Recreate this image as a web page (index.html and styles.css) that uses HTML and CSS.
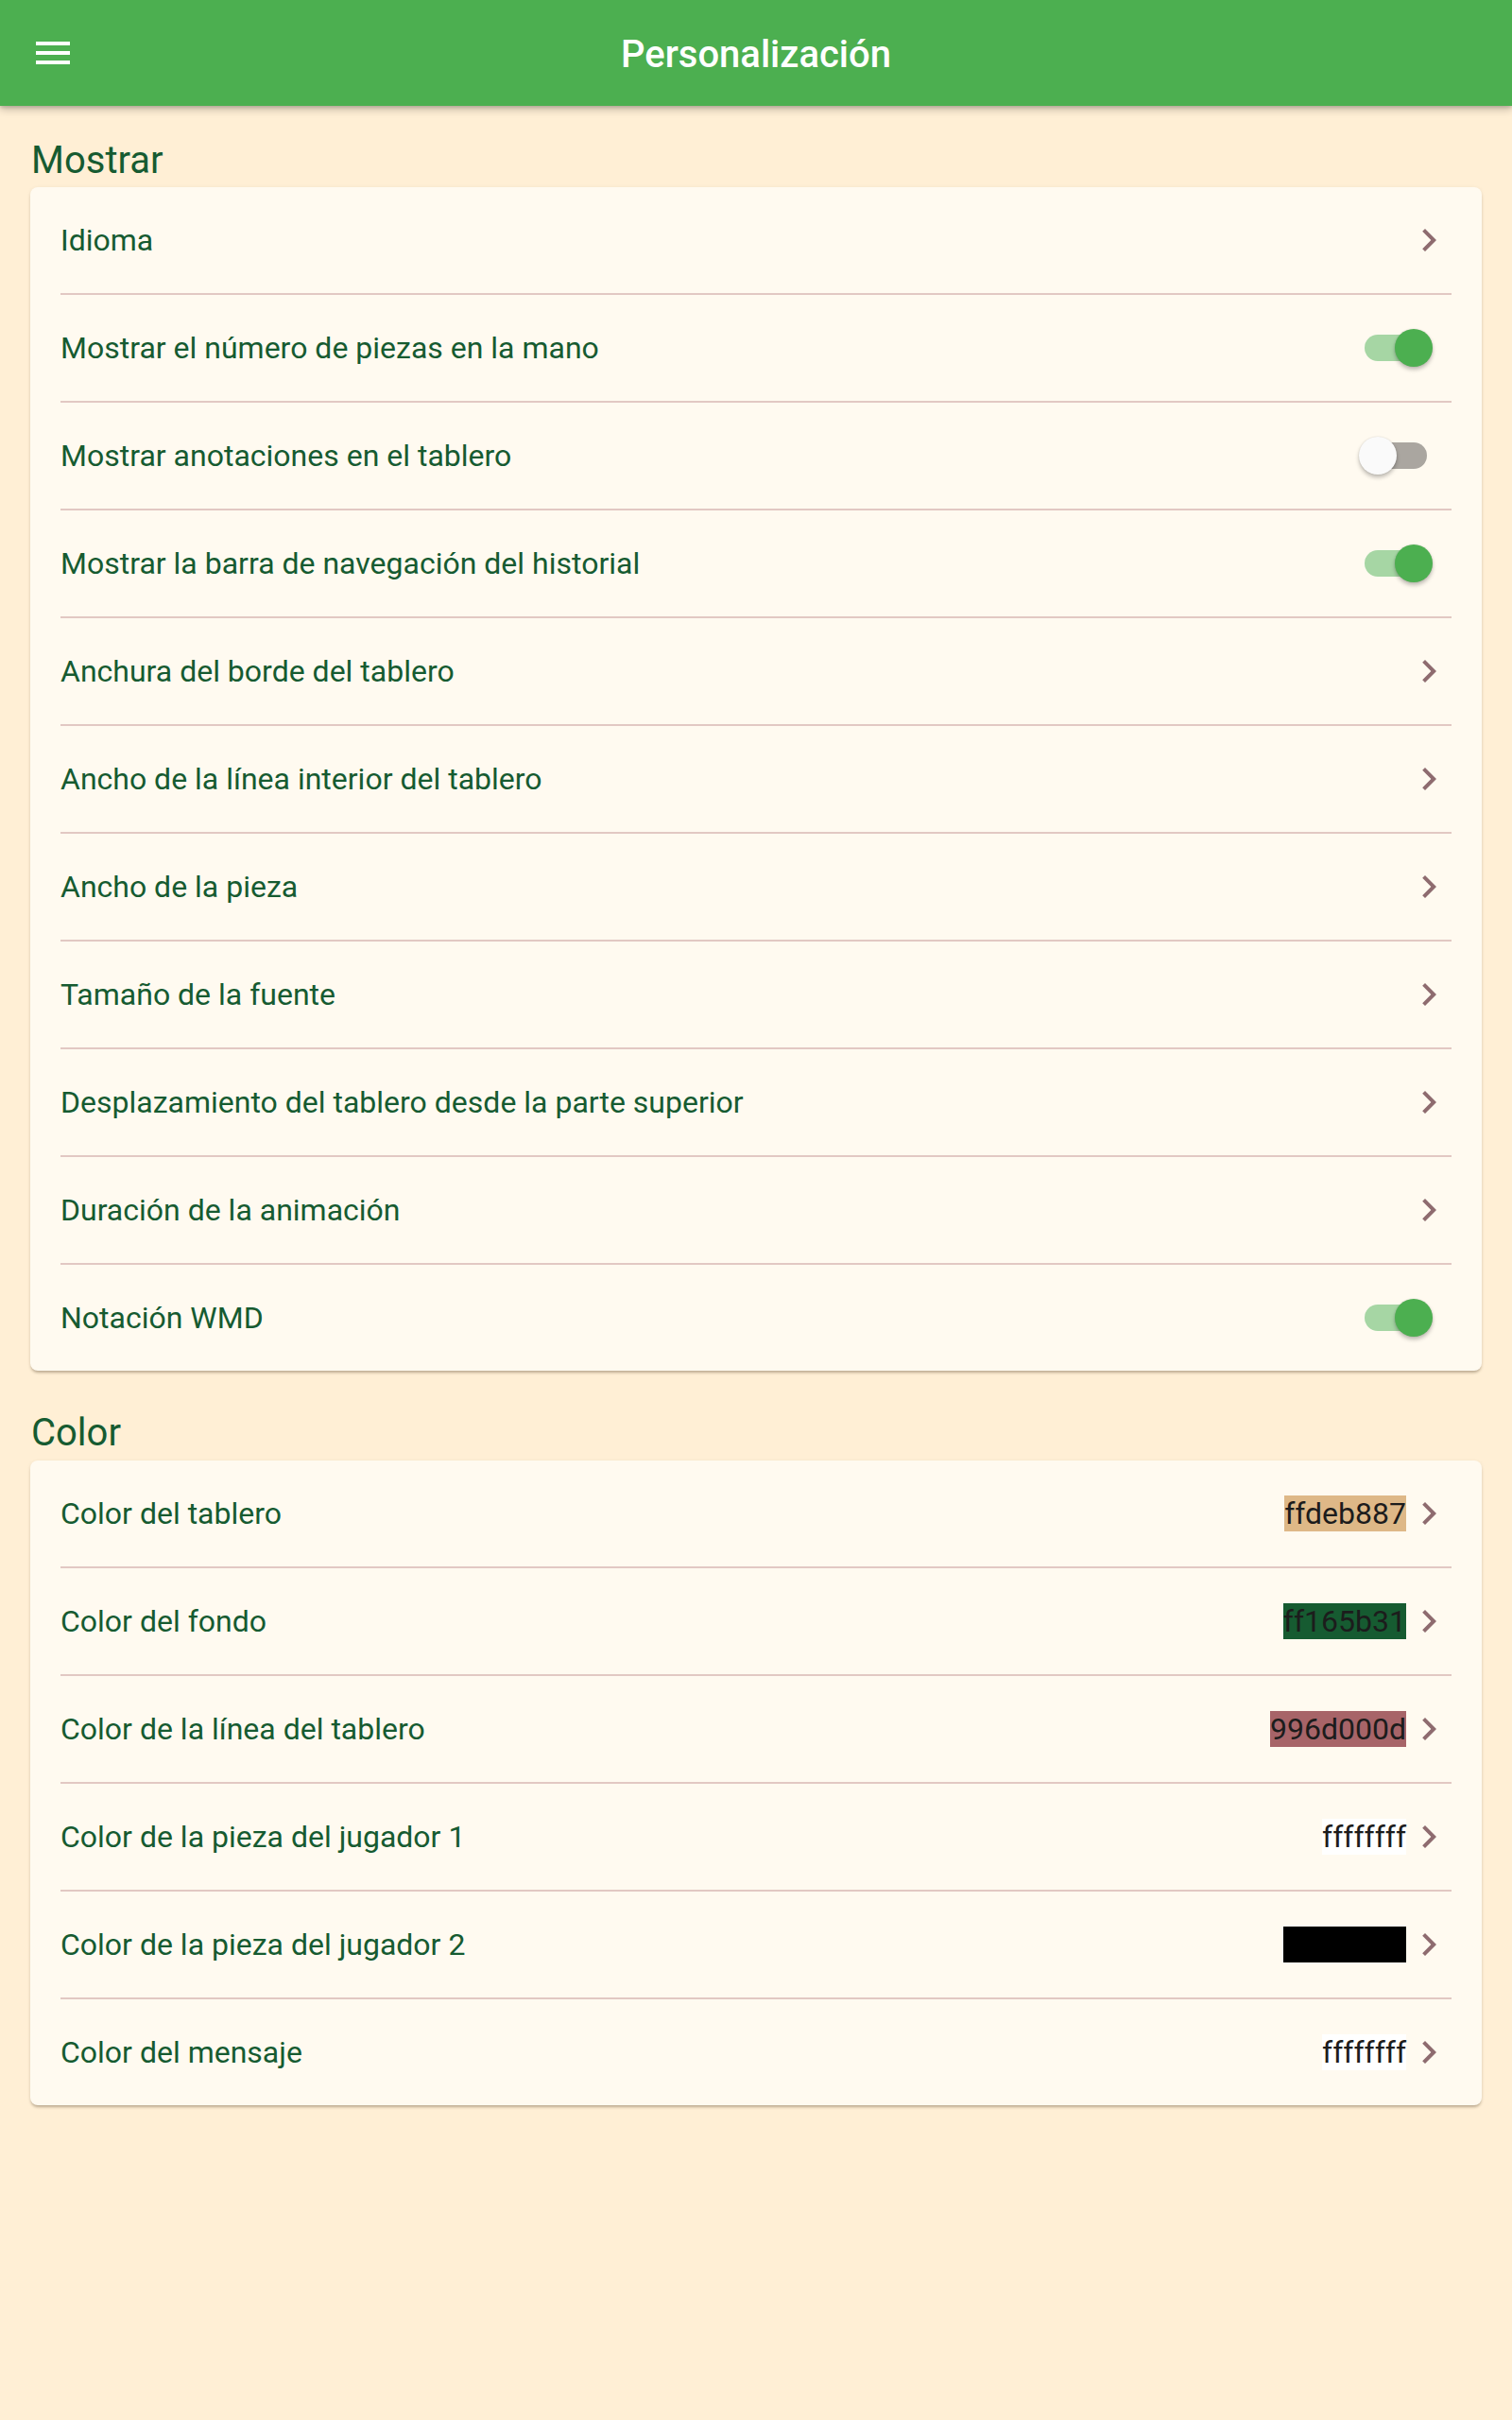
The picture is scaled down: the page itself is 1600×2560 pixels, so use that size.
FILE: index.html
```html
<!DOCTYPE html>
<html lang="es">
<head>
<meta charset="utf-8">
<title>Personalización</title>
<link rel="stylesheet" href="styles.css">
</head>
<body>
<header class="appbar">
  <span class="menu">
    <svg viewBox="0 0 24 24" width="48" height="48"><path fill="#fff" d="M3 18h18v-2H3v2zm0-5h18v-2H3v2zm0-7v2h18V6H3z"/></svg>
  </span>
  <h1 class="title">Personalización</h1>
</header>

<main>
  <h2 class="section">Mostrar</h2>
  <section class="card">
    <div class="row"><span class="label">Idioma</span><svg class="chev" viewBox="0 0 24 24"><path d="M10 6L8.59 7.41 13.17 12l-4.58 4.59L10 18l6-6z"/></svg></div>
    <div class="row"><span class="label">Mostrar el número de piezas en la mano</span><span class="switch on"><span class="thumb"></span></span></div>
    <div class="row"><span class="label">Mostrar anotaciones en el tablero</span><span class="switch"><span class="thumb"></span></span></div>
    <div class="row"><span class="label">Mostrar la barra de navegación del historial</span><span class="switch on"><span class="thumb"></span></span></div>
    <div class="row"><span class="label">Anchura del borde del tablero</span><svg class="chev" viewBox="0 0 24 24"><path d="M10 6L8.59 7.41 13.17 12l-4.58 4.59L10 18l6-6z"/></svg></div>
    <div class="row"><span class="label">Ancho de la línea interior del tablero</span><svg class="chev" viewBox="0 0 24 24"><path d="M10 6L8.59 7.41 13.17 12l-4.58 4.59L10 18l6-6z"/></svg></div>
    <div class="row"><span class="label">Ancho de la pieza</span><svg class="chev" viewBox="0 0 24 24"><path d="M10 6L8.59 7.41 13.17 12l-4.58 4.59L10 18l6-6z"/></svg></div>
    <div class="row"><span class="label">Tamaño de la fuente</span><svg class="chev" viewBox="0 0 24 24"><path d="M10 6L8.59 7.41 13.17 12l-4.58 4.59L10 18l6-6z"/></svg></div>
    <div class="row"><span class="label">Desplazamiento del tablero desde la parte superior</span><svg class="chev" viewBox="0 0 24 24"><path d="M10 6L8.59 7.41 13.17 12l-4.58 4.59L10 18l6-6z"/></svg></div>
    <div class="row"><span class="label">Duración de la animación</span><svg class="chev" viewBox="0 0 24 24"><path d="M10 6L8.59 7.41 13.17 12l-4.58 4.59L10 18l6-6z"/></svg></div>
    <div class="row"><span class="label">Notación WMD</span><span class="switch on"><span class="thumb"></span></span></div>
  </section>

  <h2 class="section">Color</h2>
  <section class="card">
    <div class="row"><span class="label">Color del tablero</span><span class="value" style="background:#deb887">ffdeb887</span><svg class="chev" viewBox="0 0 24 24"><path d="M10 6L8.59 7.41 13.17 12l-4.58 4.59L10 18l6-6z"/></svg></div>
    <div class="row"><span class="label">Color del fondo</span><span class="value" style="background:#165b31">ff165b31</span><svg class="chev" viewBox="0 0 24 24"><path d="M10 6L8.59 7.41 13.17 12l-4.58 4.59L10 18l6-6z"/></svg></div>
    <div class="row"><span class="label">Color de la línea del tablero</span><span class="value" style="background:rgba(109,0,13,0.6)">996d000d</span><svg class="chev" viewBox="0 0 24 24"><path d="M10 6L8.59 7.41 13.17 12l-4.58 4.59L10 18l6-6z"/></svg></div>
    <div class="row"><span class="label">Color de la pieza del jugador 1</span><span class="value" style="background:#ffffff">ffffffff</span><svg class="chev" viewBox="0 0 24 24"><path d="M10 6L8.59 7.41 13.17 12l-4.58 4.59L10 18l6-6z"/></svg></div>
    <div class="row"><span class="label">Color de la pieza del jugador 2</span><span class="value" style="background:#000000;color:#000">ff000000</span><svg class="chev" viewBox="0 0 24 24"><path d="M10 6L8.59 7.41 13.17 12l-4.58 4.59L10 18l6-6z"/></svg></div>
    <div class="row"><span class="label">Color del mensaje</span><span class="value" style="background:#ffffff">ffffffff</span><svg class="chev" viewBox="0 0 24 24"><path d="M10 6L8.59 7.41 13.17 12l-4.58 4.59L10 18l6-6z"/></svg></div>
  </section>
</main>
</body>
</html>
```

FILE: styles.css
```css
html, body {
  margin: 0;
  padding: 0;
}
body {
  background: #ffefd5;
  font-family: Roboto, "Liberation Sans", sans-serif;
  min-height: 2560px;
}

.appbar {
  position: relative;
  z-index: 2;
  height: 112px;
  background: #4caf50;
  display: flex;
  align-items: center;
  justify-content: center;
  box-shadow: 0 4px 8px rgba(0, 0, 0, 0.22), 0 2px 3px rgba(0, 0, 0, 0.12);
}
.menu {
  position: absolute;
  left: 32px;
  top: 32px;
  width: 48px;
  height: 48px;
}
.menu svg { display: block; }
.title {
  margin: 0;
  padding-top: 3px;
  font-size: 40px;
  font-weight: 500;
  color: #ffffff;
  line-height: 47px;
}

main {
  padding: 0 32px;
}

.section {
  margin: 0;
  padding: 34px 0 5px 1px;
  font-size: 40px;
  font-weight: 400;
  line-height: 47px;
  color: #165b31;
}

.card {
  background: #fffaf0;
  border-radius: 8px;
  padding: 0 32px;
  margin-bottom: 8px;
  box-shadow: 0 3px 3px -1px rgba(90, 70, 40, 0.35), 0 1px 4px rgba(0, 0, 0, 0.08);
}
.section + .card + .section + .card {
  margin-top: 1px;
}

.row {
  height: 112px;
  display: flex;
  align-items: center;
}
.row + .row {
  border-top: 2px solid rgb(226, 200, 195);
}
.label {
  flex: 1;
  font-size: 32px;
  line-height: 38px;
  color: #165b31;
}

.chev {
  width: 48px;
  height: 48px;
  flex: none;
  fill: #8e6b6f;
}

.value {
  font-size: 32px;
  line-height: 38px;
  color: #1c1c1c;
}

.switch {
  position: relative;
  flex: none;
  width: 66px;
  height: 28px;
  border-radius: 14px;
  margin-right: 26px;
  background: #aaa6a0;
}
.switch .thumb {
  position: absolute;
  top: -6px;
  left: -6px;
  width: 40px;
  height: 40px;
  border-radius: 50%;
  background: #fafafa;
  box-shadow: 0 3px 4px rgba(0, 0, 0, 0.25), 0 0 2px rgba(0, 0, 0, 0.12);
}
.switch.on {
  background: #a6d6a4;
}
.switch.on .thumb {
  left: 32px;
  background: #4caf50;
}
```
